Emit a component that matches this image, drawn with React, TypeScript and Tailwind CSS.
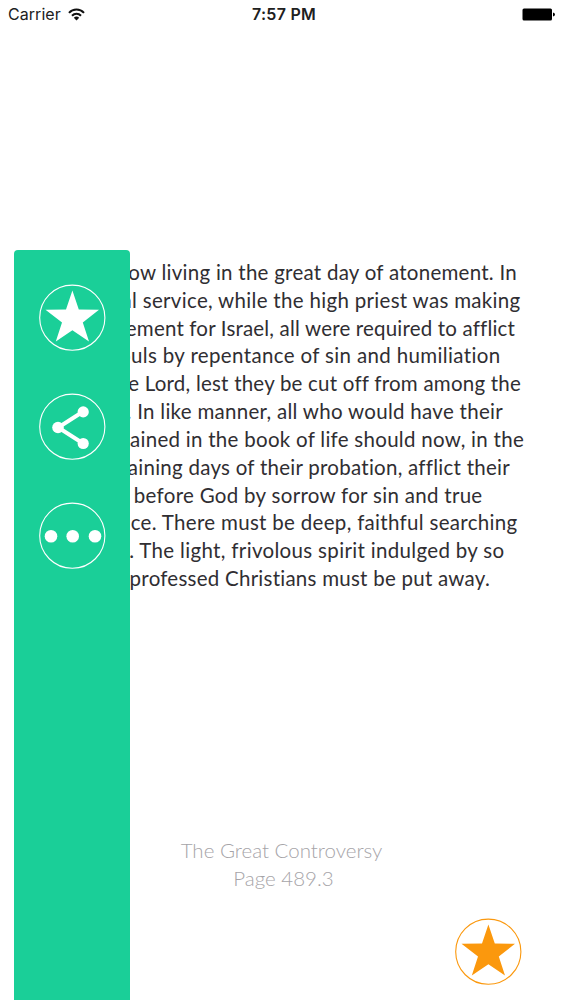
import { ReactNode } from 'react';

// Each line carries its own tracking and right inset
const PASSAGE = [
  { text: 'We are now living in the great day of atonement. In', style: 'tracking-[0.26px] pr-[46px]' },
  { text: 'the typical service, while the high priest was making', style: 'tracking-[0.31px] pr-[42.5px]' },
  { text: 'the atonement for Israel, all were required to afflict', style: 'tracking-[0.18px] pr-[48px]' },
  { text: 'their souls by repentance of sin and humiliation', style: 'tracking-[0.36px] pr-[62.5px]' },
  { text: 'before the Lord, lest they be cut off from among the', style: 'tracking-[0.22px] pr-[42px]' },
  { text: 'people. In like manner, all who would have their', style: 'tracking-[0.29px] pr-[60px]' },
  { text: 'names retained in the book of life should now, in the', style: 'tracking-[0.28px] pr-[39px]' },
  { text: 'few remaining days of their probation, afflict their', style: 'tracking-[0.26px] pr-[53px]' },
  { text: 'souls before God by sorrow for sin and true', style: 'tracking-[0.3px] pr-[80.5px]' },
  { text: 'repentance. There must be deep, faithful searching', style: 'tracking-[0.31px] pr-[45.5px]' },
  { text: 'of heart. The light, frivolous spirit indulged by so', style: 'tracking-[0.33px] pr-[58.5px]' },
  { text: 'many professed Christians must be put away.', style: 'tracking-[0.25px] pr-[73px]' },
];

interface CircleButtonProps {
  label: string;
  className: string;
  children: ReactNode;
}

const CircleButton = ({ label, className, children }: CircleButtonProps) => {
  return (
    <button type="button" aria-label={label} className={`block size-[67px] ${className}`}>
      <svg viewBox="0 0 67 67" className="size-full" fill="currentColor">
        <circle cx="33.3" cy="33.7" r="32.6" fill="none" stroke="currentColor" strokeWidth="1.1" />
        {children}
      </svg>
    </button>
  );
};

const Star = () => (
  <path d="M33.4 6.5 L39.8 25.5 L60 25.7 L43.8 38.5 L50 57.6 L33.4 46.2 L16.8 57.6 L23 38.5 L6.5 25.7 L27 25.5 Z" />
);

const StatusBar = () => {
  return (
    <header className="grid h-7 grid-cols-3 items-center px-2 font-['Inter',sans-serif] text-[16px] text-[#202020]">
      <div className="flex items-center gap-[7px]">
        <span className="tracking-[0.05px]">Carrier</span>
        <svg viewBox="0 0 17 13" className="h-[13px] w-[17px]" fill="none" stroke="#111" strokeWidth="2">
          <path d="M1 4.8 C5 0.3 12 0.3 16 4.8" />
          <path d="M4 7.8 C6.5 5.1 10.5 5.1 13 7.8" />
          <path d="M5.8 9.7 Q8.5 7.4 11.2 9.7 L8.5 12.5 Z" fill="#111" stroke="none" />
        </svg>
      </div>
      <span className="pl-[5px] text-center font-semibold tracking-[0.25px]">7:57 PM</span>
      <svg viewBox="0 0 34 13" className="h-[13px] w-[34px] justify-self-end" fill="#000">
        <rect x="1.5" y="0.5" width="29.5" height="12" rx="1.5" />
        <path d="M32 4.5 Q34 4.8 34 6.5 Q34 8.2 32 8.5 Z" />
      </svg>
    </header>
  );
};

const ActionPanel = () => {
  return (
    <aside className="absolute top-[250px] bottom-0 left-[13.8px] flex w-[116.5px] flex-col items-center gap-[42px] rounded-t-[4px] bg-[#1acf98] pt-[34px] text-white">
      <CircleButton label="Favorite" className="text-white">
        <Star />
      </CircleButton>
      <CircleButton label="Share" className="text-white">
        <path d="M44.2 18.5 L19.2 34.5 L44.2 50.5" fill="none" stroke="currentColor" strokeWidth="4" />
        <circle cx="44.2" cy="18.9" r="5.6" />
        <circle cx="19" cy="34.5" r="5.8" />
        <circle cx="44.2" cy="50.5" r="5.6" />
      </CircleButton>
      <CircleButton label="More" className="text-white">
        <circle cx="12" cy="34.2" r="6.3" />
        <circle cx="33.7" cy="34.2" r="6.3" />
        <circle cx="56" cy="34.2" r="6.3" />
      </CircleButton>
    </aside>
  );
};

export default function App() {
  return (
    <div className="relative flex h-[1000px] w-[563px] flex-col overflow-hidden bg-white font-['Lato',sans-serif]">
      <StatusBar />

      <main className="mt-[231px] text-[20.5px] leading-[27.82px] text-[#302e32]">
        {PASSAGE.map((line) => (
          <p key={line.text} className={`text-right whitespace-nowrap ${line.style}`}>
            {line.text}
          </p>
        ))}
      </main>

      <footer className="mt-[243px] text-center text-[20.5px] leading-[28px] font-light text-[#a6a4a8]">
        <p>The Great Controversy</p>
        <p className="pl-[4px]">Page 489.3</p>
      </footer>

      <div className="mt-[26.5px] mr-[41px] self-end">
        <CircleButton label="Favorited" className="text-[#fb980d]">
          <Star />
        </CircleButton>
      </div>

      <ActionPanel />
    </div>
  );
}
